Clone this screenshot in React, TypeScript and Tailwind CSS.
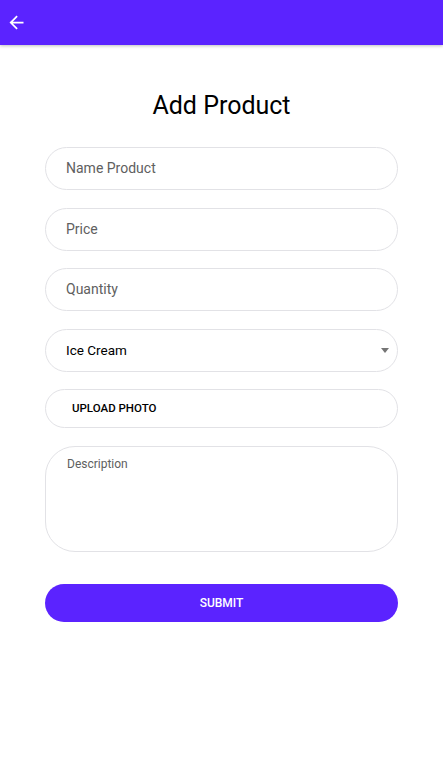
import React from 'react';

const field =
  'h-[43px] w-full rounded-full border border-[#e2e2e6] bg-white px-5 flex items-center text-[14px]';

export default function App() {
  return (
    <div className="min-h-[779px] bg-white font-['Roboto',sans-serif]">
      <div className="h-[45px] bg-[#5b23ff] shadow-[0_1px_3px_rgba(0,0,0,0.25)] flex items-center px-[6px]">
        <svg width="21" height="21" viewBox="0 0 24 24" fill="white">
          <path d="M20 11H7.83l5.59-5.59L12 4l-8 8 8 8 1.41-1.41L7.83 13H20v-2z" />
        </svg>
      </div>

      <div className="px-[45px] pt-[45px]">
        <h1 className="text-center text-[25px] leading-[32px] text-black">Add Product</h1>

        <div className="mt-[25px] flex flex-col gap-[17.5px]">
          <div className={field}>
            <span className="text-[#606060]">Name Product</span>
          </div>
          <div className={field}>
            <span className="text-[#606060]">Price</span>
          </div>
          <div className={field}>
            <span className="text-[#606060]">Quantity</span>
          </div>
          <div className={field + ' justify-between pr-[8px]'}>
            <span className="text-[13.5px] text-black">Ice Cream</span>
            <svg width="8" height="5" viewBox="0 0 8 5" className="mt-[1px]">
              <path d="M0 0h8L4 5z" fill="#757575" />
            </svg>
          </div>
          <div className="h-[39px] w-full rounded-full border border-[#e2e2e6] bg-white pl-[26px] flex items-center">
            <span className="text-[11.5px] font-medium text-black">UPLOAD PHOTO</span>
          </div>
          <div className="h-[106px] w-full rounded-[30px] border border-[#e2e2e6] bg-white pl-[21px] pt-[8px] leading-[16px]">
            <span className="text-[12px] text-[#606060]">Description</span>
          </div>
        </div>

        <button className="mt-[32px] h-[38px] w-full rounded-full bg-[#5b23ff] text-white text-[12px] font-medium">
          SUBMIT
        </button>
      </div>
    </div>
  );
}
